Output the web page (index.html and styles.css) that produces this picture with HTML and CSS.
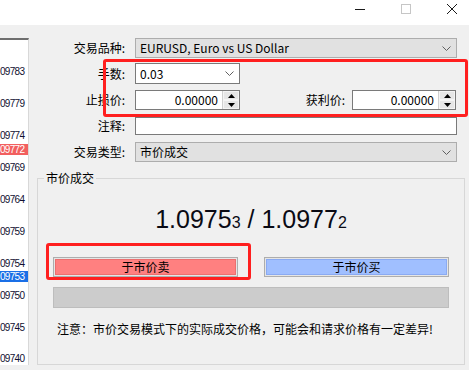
FILE: index.html
```html
<!DOCTYPE html>
<html>
<head>
    <title>新订单</title>
    <link rel="stylesheet" href="styles.css">
</head>
<body>
    <div class="window">
        <div class="titlebar">
            <span class="tb-btn">
                <svg width="10" height="10" viewBox="0 0 10 10"><line x1="0" y1="5.5" x2="10" y2="5.5" stroke="#1a1a1a" stroke-width="1"/></svg>
            </span>
            <span class="tb-btn">
                <svg width="10" height="10" viewBox="0 0 10 10"><rect x="0.5" y="0.5" width="9" height="9" fill="none" stroke="#c6c6c6" stroke-width="1"/></svg>
            </span>
            <span class="tb-btn tb-close">
                <svg width="10" height="10" viewBox="0 0 10 10"><path d="M0 0 L10 10 M10 0 L0 10" stroke="#1a1a1a" stroke-width="1"/></svg>
            </span>
        </div>

        <div class="main">
            <div class="scale">
                <div class="tick">09783</div>
                <div class="tick">09779</div>
                <div class="tick">09774</div>
                <div class="tick">09769</div>
                <div class="tick">09764</div>
                <div class="tick">09759</div>
                <div class="tick">09754</div>
                <div class="tick">09750</div>
                <div class="tick">09745</div>
                <div class="tick tick-last">09740</div>
                <div class="marker marker-ask">09772</div>
                <div class="marker marker-bid">09753</div>
            </div>

            <div class="panel">
                <div class="row row-symbol">
                    <span class="lbl">交易品种:</span>
                    <div class="select">
                        <span>EURUSD, Euro vs US Dollar</span>
                        <svg class="chev" width="9" height="5" viewBox="0 0 9 5"><path d="M0.5 0.5 L4.5 4.5 L8.5 0.5" fill="none" stroke="#606060" stroke-width="1"/></svg>
                    </div>
                </div>
                <div class="row row-lots">
                    <span class="lbl">手数:</span>
                    <div class="combo">
                        <span>0.03</span>
                        <svg class="chev" width="9" height="5" viewBox="0 0 9 5"><path d="M0.5 0.5 L4.5 4.5 L8.5 0.5" fill="none" stroke="#606060" stroke-width="1"/></svg>
                    </div>
                </div>
                <div class="row row-sl">
                    <span class="lbl">止损价:</span>
                    <div class="num">
                        <span class="val">0.00000</span>
                        <div class="spin">
                            <span class="spin-half"><svg width="7" height="4" viewBox="0 0 7 4"><path d="M3.5 0 L7 4 L0 4 Z" fill="#000"/></svg></span>
                            <span class="spin-half"><svg width="7" height="4" viewBox="0 0 7 4"><path d="M0 0 L7 0 L3.5 4 Z" fill="#000"/></svg></span>
                        </div>
                    </div>
                    <span class="lbl-tp">获利价:</span>
                    <div class="num num-tp">
                        <span class="val">0.00000</span>
                        <div class="spin">
                            <span class="spin-half"><svg width="7" height="4" viewBox="0 0 7 4"><path d="M3.5 0 L7 4 L0 4 Z" fill="#000"/></svg></span>
                            <span class="spin-half"><svg width="7" height="4" viewBox="0 0 7 4"><path d="M0 0 L7 0 L3.5 4 Z" fill="#000"/></svg></span>
                        </div>
                    </div>
                </div>
                <div class="row row-comment">
                    <span class="lbl">注释:</span>
                    <div class="text-input"></div>
                </div>
                <div class="row row-type">
                    <span class="lbl">交易类型:</span>
                    <div class="select">
                        <span>市价成交</span>
                        <svg class="chev" width="9" height="5" viewBox="0 0 9 5"><path d="M0.5 0.5 L4.5 4.5 L8.5 0.5" fill="none" stroke="#606060" stroke-width="1"/></svg>
                    </div>
                </div>

                <div class="group">
                    <div class="group-title">市价成交</div>
                    <div class="price">1.0975<span class="pip">3</span> / 1.0977<span class="pip">2</span></div>
                    <div class="trade-btns">
                        <div class="trade"><span class="sell">于市价卖</span></div>
                        <div class="trade"><span class="buy">于市价买</span></div>
                    </div>
                    <div class="bar"></div>
                    <div class="notice">注意：市价交易模式下的实际成交价格，可能会和请求价格有一定差异!</div>
                </div>
            </div>
        </div>

        <div class="mark mark-top"></div>
        <div class="mark mark-sell"></div>
    </div>
</body>
</html>
```

FILE: styles.css
```css
* {
    box-sizing: border-box;
}

body {
    margin: 0;
    font-family: "Noto Sans CJK SC", "Noto Sans", sans-serif;
    font-size: 12px;
    color: #000;
    background-color: #f0f0f0;
}

.window {
    position: relative;
    width: 469px;
    height: 370px;
    overflow: hidden;
    background-color: #f0f0f0;
}

/* title bar */
.titlebar {
    height: 25px;
    background-color: #fff;
    display: flex;
    justify-content: flex-end;
}

.tb-btn {
    width: 46px;
    height: 25px;
    flex: none;
    display: flex;
    justify-content: center;
    align-items: flex-start;
    padding-top: 4px;
}

.tb-close {
    margin-right: -6px;
}

.tb-btn svg {
    display: block;
}

.main {
    display: flex;
    padding-top: 13px;
}

/* price scale on the left */
.scale {
    position: relative;
    width: 29px;
    height: 327px;
    flex: none;
    background-color: #fff;
    border-top: 2px solid #6e6e6e;
    border-right: 1px solid #d8d8d8;
    padding-top: 16px;
    font-family: "Liberation Sans", Arial, sans-serif;
    font-size: 10px;
    letter-spacing: -0.7px;
}

.tick {
    height: 32px;
    line-height: 32px;
    text-align: right;
    padding-right: 4px;
    color: #101030;
    white-space: nowrap;
}

.tick-last {
    height: 24px;
    line-height: 30px;
}

.marker {
    position: absolute;
    left: 0;
    right: 0;
    height: 11px;
    line-height: 11px;
    text-align: right;
    padding-right: 4px;
    color: #fff;
    white-space: nowrap;
}

.marker-ask {
    top: 104px;
    background-color: #f25f5f;
}

.marker-bid {
    top: 231px;
    background-color: #1a6fe6;
}

/* order form */
.panel {
    flex: 1;
    padding: 0 4px 0 8px;
}

.row {
    display: flex;
    align-items: center;
    margin-right: 8px;
}

.row-symbol {
    height: 20px;
    margin-bottom: 5px;
}

.row-lots {
    height: 21px;
    margin-bottom: 6px;
}

.row-sl {
    height: 20px;
    margin-bottom: 7px;
}

.row-comment {
    height: 18px;
    margin-bottom: 7px;
}

.row-type {
    height: 20px;
}

.lbl {
    width: 88px;
    margin-right: 10px;
    text-align: right;
    line-height: 16px;
    white-space: nowrap;
}

.lbl-tp {
    margin-left: auto;
    margin-right: 7px;
    line-height: 16px;
}

.select {
    flex: 1;
    height: 100%;
    display: flex;
    align-items: center;
    justify-content: space-between;
    padding: 0 5px 0 4px;
    background-color: #e1e1e1;
    border: 1px solid #adadad;
    line-height: 16px;
}

.combo {
    width: 105px;
    height: 100%;
    display: flex;
    align-items: center;
    justify-content: space-between;
    padding: 0 5px 0 4px;
    background-color: #fff;
    border: 1px solid #7a7a7a;
    line-height: 16px;
}

.chev {
    display: block;
}

.num {
    width: 105px;
    height: 100%;
    display: flex;
    background-color: #fff;
    border: 1px solid #7a7a7a;
}

.num-tp {
    width: 104px;
    margin-right: 1px;
}

.num .val {
    flex: 1;
    text-align: right;
    padding-right: 4px;
    line-height: 18px;
}

.spin {
    width: 17px;
    display: flex;
    flex-direction: column;
    background-color: #f0f0f0;
    border-left: 1px solid #cfcfcf;
}

.spin-half {
    flex: 1;
    display: flex;
    justify-content: center;
    align-items: center;
    background-color: #e6e6e6;
    border: 1px solid #f4f4f4;
}

.spin-half svg {
    display: block;
}

.text-input {
    flex: 1;
    height: 100%;
    background-color: #fff;
    border: 1px solid #7a7a7a;
}

/* market execution group */
.group {
    height: 187px;
    margin-top: 16px;
    border: 1px solid #d7d7d7;
    padding: 0 15px;
}

.group-title {
    width: fit-content;
    margin: -9px 0 0 -9px;
    padding: 0 2px;
    line-height: 16px;
    background-color: #f0f0f0;
}

.price {
    margin-top: 18px;
    text-align: center;
    font-family: "Liberation Sans", Arial, sans-serif;
    font-size: 25px;
    line-height: 30px;
    color: #0a0a14;
}

.pip {
    font-size: 16px;
}

.trade-btns {
    display: flex;
    gap: 26px;
    margin-top: 19px;
}

.trade {
    flex: 1;
    height: 20px;
    padding: 1px;
    background-color: #e5e5e5;
    border: 1px solid #adadad;
}

.trade span {
    height: 100%;
    display: flex;
    justify-content: center;
    align-items: center;
    line-height: 14px;
}

.sell {
    background-color: #ff8080;
    border: 1px solid #ec6f6f;
}

.buy {
    background-color: #a0bfff;
    border: 1px solid #8aaaf2;
}

.bar {
    height: 21px;
    margin-top: 10px;
    background-color: #cccccc;
    border: 1px solid #bdbdbd;
}

.notice {
    margin-top: 13px;
    padding-left: 4px;
    line-height: 16px;
    white-space: nowrap;
}

/* red annotation frames */
.mark {
    position: absolute;
    border: 3px solid #ff1f1f;
    border-radius: 3px;
}

.mark-top {
    left: 103px;
    top: 59px;
    width: 365px;
    height: 58px;
}

.mark-sell {
    left: 46px;
    top: 243px;
    width: 205px;
    height: 37px;
}
```
